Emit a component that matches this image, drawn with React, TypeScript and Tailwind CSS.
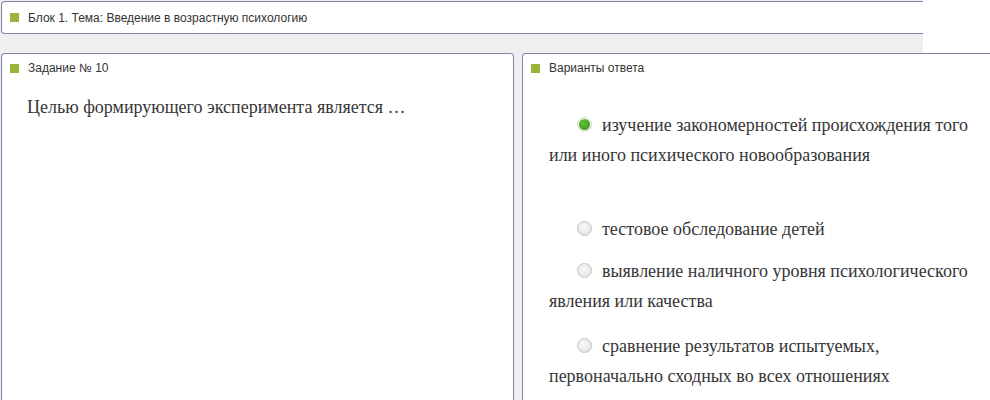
import React from 'react';

interface Option {
  text: string;
  selected?: boolean;
  spacing: string;
}

const options: Option[] = [
  { text: 'изучение закономерностей происхождения того или иного психического новообразования', selected: true, spacing: 'mt-[35px]' },
  { text: 'тестовое обследование детей', spacing: 'mt-[44px]' },
  { text: 'выявление наличного уровня психологического явления или качества', spacing: 'mt-[12px]' },
  { text: 'сравнение результатов испытуемых, первоначально сходных во всех отношениях', spacing: 'mt-[15px]' },
];

function Marker() {
  return <span className="inline-block w-[9px] h-[9px] bg-[#9bb53a] shrink-0" />;
}

function PanelTitle({ children }: { children: React.ReactNode }) {
  return (
    <div className="flex items-center gap-[9px] pl-[8px] pt-[7px] text-[12px] leading-[14px] text-[#333]">
      <Marker />
      <span>{children}</span>
    </div>
  );
}

function Radio({ checked }: { checked?: boolean }) {
  return checked ? (
    <span className="inline-block align-middle relative -top-[2px] w-[15px] h-[15px] rounded-full border border-[#d3dccb] bg-[#f2f5ef] mr-[10px]">
      <span className="absolute left-[1px] top-[1px] w-[11px] h-[11px] rounded-full bg-[radial-gradient(circle_at_40%_35%,#62bd34,#3b9418)]" />
    </span>
  ) : (
    <span className="inline-block align-middle relative -top-[2px] w-[15px] h-[15px] rounded-full border border-[#c4c4c4] bg-[radial-gradient(circle_at_45%_40%,#fafafa,#dcdcdc)] mr-[10px]" />
  );
}

export default function App() {
  return (
    <div className="w-[990px] h-[400px] overflow-hidden bg-white font-['Liberation_Sans',Arial,sans-serif]">
      {/* block header strip */}
      <div className="w-[923px] bg-[#efeff2] pt-px pl-px pb-[19px]">
        <div className="h-[33px] bg-white border border-r-0 border-[#7f84a8] rounded-l-[4px] flex items-center gap-[9px] pl-[8px] text-[12px] text-[#333]">
          <Marker />
          <span>Блок 1. Тема: Введение в возрастную психологию</span>
        </div>
      </div>

      <div className="flex gap-[8px] pl-px bg-[#efeff2] h-[347px]">
        {/* question */}
        <div className="w-[513px] shrink-0 bg-white border border-b-0 border-[#7f84a8] rounded-t-[4px]">
          <PanelTitle>Задание № 10</PanelTitle>
          <p className="mt-[17px] pl-[25px] font-['Liberation_Serif','Times_New_Roman',serif] text-[18px] leading-[30px] text-[#363636]">
            Целью формирующего эксперимента является …
          </p>
        </div>

        {/* answers */}
        <div className="w-[480px] shrink-0 bg-white border border-b-0 border-r-0 border-[#7f84a8] rounded-tl-[4px]">
          <PanelTitle>Варианты ответа</PanelTitle>
          <div className="pl-[26px] w-[460px] font-['Liberation_Serif','Times_New_Roman',serif] text-[18px] leading-[30px] text-[#363636]">
            {options.map((o) => (
              <p key={o.text} className={`${o.spacing} indent-[28px]`}>
                <Radio checked={o.selected} />
                {o.text}
              </p>
            ))}
          </div>
        </div>
      </div>
    </div>
  );
}
